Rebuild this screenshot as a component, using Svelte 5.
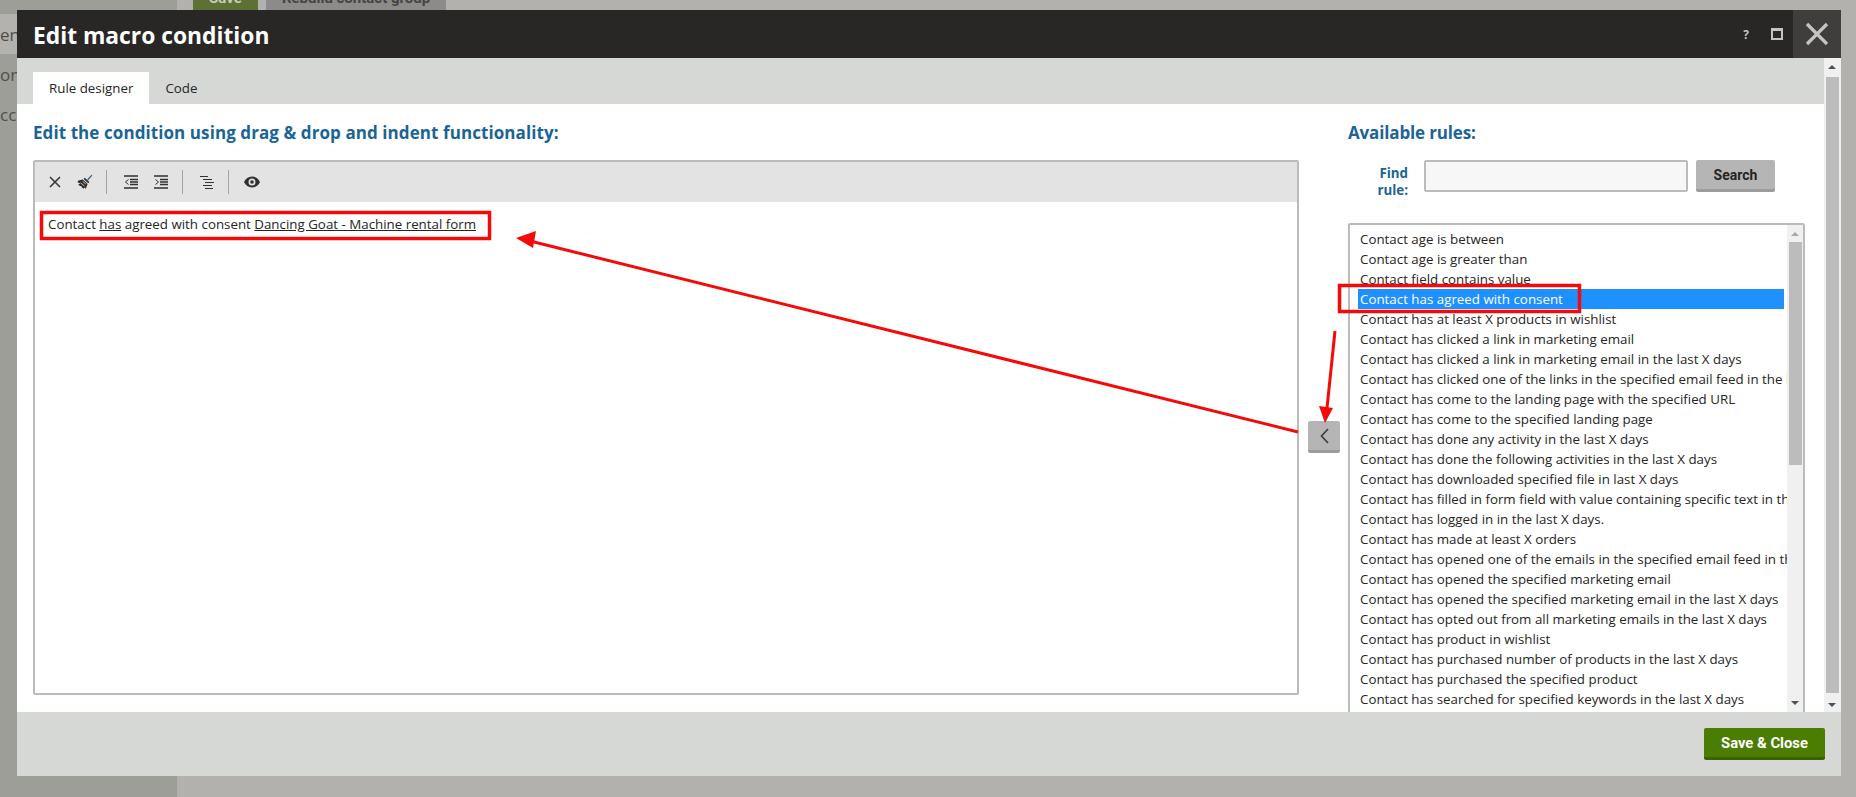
<script>
  const rules = [
    'Contact age is between',
    'Contact age is greater than',
    'Contact field contains value',
    'Contact has agreed with consent',
    'Contact has at least X products in wishlist',
    'Contact has clicked a link in marketing email',
    'Contact has clicked a link in marketing email in the last X days',
    'Contact has clicked one of the links in the specified email feed in the last X days',
    'Contact has come to the landing page with the specified URL',
    'Contact has come to the specified landing page',
    'Contact has done any activity in the last X days',
    'Contact has done the following activities in the last X days',
    'Contact has downloaded specified file in last X days',
    'Contact has filled in form field with value containing specific text in the last X days',
    'Contact has logged in in the last X days.',
    'Contact has made at least X orders',
    'Contact has opened one of the emails in the specified email feed in the last X days',
    'Contact has opened the specified marketing email',
    'Contact has opened the specified marketing email in the last X days',
    'Contact has opted out from all marketing emails in the last X days',
    'Contact has product in wishlist',
    'Contact has purchased number of products in the last X days',
    'Contact has purchased the specified product',
    'Contact has searched for specified keywords in the last X days'
  ];
  const selected = 'Contact has agreed with consent';
</script>

<div class="page">
  <div class="behind-side">
    <div class="side-row side-row--active">en</div>
    <div class="side-row">on</div>
    <div class="side-row">cc</div>
  </div>
  <div class="behind-actions">
    <span class="behind-btn behind-btn--save">Save</span>
    <span class="behind-btn">Rebuild contact group</span>
  </div>

  <div class="dialog">
    <header class="dialog__header">
      <h1>Edit macro condition</h1>
      <span class="dialog__help">?</span>
      <span class="dialog__max"></span>
      <button class="dialog__close" type="button" aria-label="Close">
        <svg width="24" height="24" viewBox="0 0 24 24"><path d="M2 2 22 22M22 2 2 22" stroke="#c4c4c0" stroke-width="3.2" fill="none"/></svg>
      </button>
    </header>

    <div class="dialog__body">
      <div class="dialog__main">
        <nav class="tabs">
          <span class="tab tab--active">Rule designer</span>
          <span class="tab">Code</span>
        </nav>

        <div class="content">
          <section class="designer">
            <h2>Edit the condition using drag &amp; drop and indent functionality:</h2>
            <div class="editor">
              <div class="toolbar">
                <svg class="ico ico--x" width="12" height="12" viewBox="0 0 12 12"><path d="M1 1 11 11M11 1 1 11" stroke="#3a3836" stroke-width="1.6" fill="none"/></svg>
                <svg class="ico ico--brush" width="16" height="16" viewBox="0 0 16 16">
                  <path d="M10.200 5.200 14.600.8l.8.8-4.200 4.600z" fill="#2f5f80"/>
                  <path d="M7.800 3.800 12.400 8l-1.200 1.300L6.600 5z" fill="#2e2c2a"/>
                  <path d="M5.800 5.600l4.800 4.400-1.800 4.800-1.600-1.400-.6 1.400-1.900-1.600-.2-1.500-1.200.6L1.200 10.400l2.300-1L.4 8.200l1-1.600z" fill="#2e2c2a"/>
                  <path d="M3.500 8.800 7.500 12M5.800 7.400 8.800 10" stroke="#e3e3e3" stroke-width=".8" fill="none"/>
                </svg>
                <span class="sep"></span>
                <svg class="ico ico--outdent" width="14" height="14" viewBox="0 0 14 14"><path d="M0 1h14M6 4.500h8M6 7h8M6 9.500h8M0 13h14" stroke="#33312f" stroke-width="1.500" fill="none"/><path d="M4.500 4.500 1.500 7l3 2.500" stroke="#33312f" fill="none"/></svg>
                <svg class="ico ico--indent" width="14" height="14" viewBox="0 0 14 14"><path d="M0 1h14M6 4.500h8M6 7h8M6 9.500h8M0 13h14" stroke="#33312f" stroke-width="1.500" fill="none"/><path d="M1.500 4.500 4.500 7l-3 2.500" stroke="#33312f" fill="none"/></svg>
                <span class="sep sep--b"></span>
                <svg class="ico ico--lines" width="14" height="14" viewBox="0 0 14 14"><path d="M0 1.500h8M3 4.500h9M5 7.500h9M3 10.500h9M5 13.500h8" stroke="#33312f" stroke-width="1.200" fill="none"/></svg>
                <span class="sep sep--c"></span>
                <svg class="ico ico--eye" width="16" height="12" viewBox="0 0 16 12"><path fill-rule="evenodd" d="M8 .5C4.500.5 1.600 2.600 0 6c1.600 3.400 4.500 5.500 8 5.500s6.400-2.100 8-5.500C14.400 2.600 11.500.5 8 .5zM8 2.500a3.500 3.500 0 1 1 0 7 3.500 3.500 0 0 1 0-7z" fill="#33312f"/><circle cx="8" cy="6" r="1.800" fill="#33312f"/></svg>
              </div>
              <div class="editor__area">
                Contact <u>has</u> agreed with consent <u>Dancing Goat - Machine rental form</u>
              </div>
            </div>
          </section>

          <div class="mover">
            <button class="mover__btn" type="button" aria-label="Add rule">
              <svg width="9" height="16" viewBox="0 0 9 16"><path d="M8 1 1.500 8 8 15" stroke="#403e3c" stroke-width="1.700" fill="none"/></svg>
            </button>
          </div>

          <section class="available">
            <h2>Available rules:</h2>
            <div class="find">
              <label for="find-rule">Find rule:</label>
              <input id="find-rule" type="text" />
              <button class="btn-search" type="button">Search</button>
            </div>
            <div class="rulebox">
              <ul>
                {#each rules as rule}
                  <li class:is-selected={rule === selected}>{rule}</li>
                {/each}
              </ul>
              <div class="scroll scroll--inner">
                <span class="arrow arrow--up"></span>
                <span class="thumb"></span>
                <span class="arrow arrow--down"></span>
              </div>
            </div>
          </section>
        </div>
      </div>

      <div class="scroll scroll--outer">
        <span class="arrow arrow--up"></span>
        <span class="thumb"></span>
        <span class="arrow arrow--down"></span>
      </div>
    </div>

    <footer class="dialog__footer">
      <button class="btn-save" type="button">Save &amp; Close</button>
    </footer>
  </div>

  <svg class="notes" width="1856" height="797" viewBox="0 0 1856 797">
    <rect x="41.500" y="212.500" width="448" height="26" fill="none" stroke="#f50a0a" stroke-width="3.500"/>
    <rect x="1339.500" y="285.500" width="240" height="26" fill="none" stroke="#f50a0a" stroke-width="3.500"/>
    <path d="M1298 432 530 241" stroke="#f50a0a" stroke-width="3" fill="none"/>
    <path d="M516 238 536 231 533 248z" fill="#f50a0a"/>
    <path d="M1335 331 1327 408" stroke="#f50a0a" stroke-width="3" fill="none"/>
    <path d="M1325 423 1319 406 1333 408z" fill="#f50a0a"/>
  </svg>
</div>

<style>
  :global(body) {
    margin: 0;
    font-family: "Open Sans", sans-serif;
    color: #262524;
  }

  .page {
    position: relative;
    height: 797px;
    overflow: hidden;
    background: #b3b1ae;
    padding: 10px 0 0 17px;
    box-sizing: border-box;
  }

  .behind-side {
    position: absolute;
    left: 0;
    top: 0;
    bottom: 0;
    width: 177px;
    padding-top: 14px;
    box-sizing: border-box;
    background: #9d9e98;
    color: #4e4e4a;
    font-size: 17px;
  }

  .side-row {
    height: 40px;
    line-height: 41px;
    white-space: nowrap;
  }

  .side-row--active {
    background: #b3b2ae;
  }

  .behind-actions {
    position: absolute;
    left: 193px;
    top: -14px;
    display: flex;
    gap: 8px;
  }

  .behind-btn {
    width: 180px;
    height: 24px;
    text-align: center;
    background: #8c8b89;
    color: #454442;
    font: bold 15px/24px Roboto, sans-serif;
  }

  .behind-btn--save {
    background: #5b7136;
    color: #c8cdb9;
    width: 65px;
  }

  .dialog {
    position: relative;
    width: 1824px;
    height: 766px;
    display: flex;
    flex-direction: column;
  }

  .dialog__header {
    flex: none;
    height: 48px;
    display: flex;
    align-items: center;
    background: #282725;
    color: #fff;
    padding-left: 16px;
  }

  .dialog__header h1 {
    flex: 1;
    margin: 0;
    padding-top: 2px;
    font-size: 22.8px;
    font-weight: 700;
  }

  .dialog__help {
    font-size: 12px;
    font-weight: 700;
    color: #c4c4c0;
    margin-right: 22px;
  }

  .dialog__max {
    width: 8px;
    height: 7px;
    border: 2px solid #c4c4c0;
    border-top-width: 3px;
    margin-right: 10px;
  }

  .dialog__close {
    width: 48px;
    height: 48px;
    border: 0;
    padding: 0;
    background: #403e3c;
    display: flex;
    align-items: center;
    justify-content: center;
  }

  .dialog__body {
    flex: 1;
    min-height: 0;
    display: flex;
  }

  .dialog__main {
    flex: 1;
    min-width: 0;
    display: flex;
    flex-direction: column;
    background: #fff;
  }

  .tabs {
    flex: none;
    height: 46px;
    box-sizing: border-box;
    padding: 14px 0 0 16px;
    background: #d6d8d5;
    display: flex;
    font-size: 13.33px;
  }

  .tab {
    padding: 0 16px;
    line-height: 32px;
  }

  .tab--active {
    background: #fff;
  }

  .content {
    flex: 1;
    min-height: 0;
    overflow: hidden;
    display: flex;
    padding-left: 16px;
  }

  h2 {
    margin: 0;
    height: 56px;
    padding-top: 18px;
    box-sizing: border-box;
    font-size: 17px;
    line-height: 22px;
    font-weight: 700;
    color: #1a6496;
  }

  .designer {
    flex: none;
    width: 1266px;
  }

  .designer h2 {
    letter-spacing: 0.08px;
  }

  .editor {
    height: 535px;
    box-sizing: border-box;
    border: 2px solid #bbb;
    border-radius: 2px;
  }

  .toolbar {
    height: 40px;
    background: #e3e3e3;
    display: flex;
    align-items: center;
    padding-left: 14px;
  }

  .ico {
    flex: none;
  }

  .ico--brush {
    margin-left: 16px;
  }

  .sep {
    flex: none;
    width: 1px;
    height: 24px;
    background: #a5a5a5;
    margin-left: 13px;
  }

  .ico--outdent {
    margin-left: 17px;
  }

  .ico--indent {
    margin-left: 16px;
  }

  .sep--b {
    margin-left: 14px;
  }

  .ico--lines {
    margin-left: 17px;
  }

  .sep--c {
    margin-left: 14px;
  }

  .ico--eye {
    margin-left: 15px;
  }

  .editor__area {
    padding: 12px 13px;
    font-size: 13.33px;
    line-height: 20px;
  }

  .mover {
    flex: none;
    width: 49px;
    padding-top: 317px;
    padding-left: 9px;
    box-sizing: border-box;
  }

  .mover__btn {
    display: flex;
    align-items: center;
    justify-content: center;
    width: 32px;
    height: 32px;
    padding: 0;
    border: 0;
    border-bottom: 3px solid #9c9c9c;
    border-radius: 2px;
    background: #b5b5b5;
  }

  .available {
    flex: none;
    width: 457px;
  }

  .available h2 {
    letter-spacing: -0.15px;
  }

  .find {
    display: flex;
    align-items: flex-start;
    height: 32px;
    margin-bottom: 31px;
  }

  .find label {
    width: 60px;
    padding-top: 5px;
    text-align: right;
    font-size: 13.33px;
    line-height: 17px;
    font-weight: 700;
    color: #1a6496;
  }

  .find input {
    width: 264px;
    height: 32px;
    margin-left: 16px;
    padding: 0;
    box-sizing: border-box;
    border: 2px solid #bbb;
    border-radius: 2px;
    background: #f7f7f7;
    outline: 0;
  }

  .btn-search {
    width: 79px;
    height: 32px;
    margin-left: 8px;
    padding: 1px 0 0;
    border: 0;
    border-bottom: 3px solid #9c9c9c;
    border-radius: 2px;
    background: #b5b5b5;
    color: #262524;
    font: bold 14px Roboto, sans-serif;
  }

  .rulebox {
    height: 540px;
    box-sizing: border-box;
    border: 2px solid #bbb;
    border-radius: 2px;
    display: flex;
    overflow: hidden;
  }

  .rulebox ul {
    flex: 1;
    min-width: 0;
    margin: 0;
    padding: 4px 0 0 8px;
    list-style: none;
    overflow: hidden;
    font-size: 13.33px;
    line-height: 20px;
  }

  .rulebox li {
    white-space: nowrap;
    padding-left: 2px;
    margin-right: 3px;
  }

  .rulebox li.is-selected {
    background: #1e90ff;
    color: #fff;
  }

  .scroll {
    flex: none;
    position: relative;
    background: #f0f0f0;
  }

  .scroll--outer {
    width: 17px;
    height: 654px;
  }

  .scroll--inner {
    width: 16px;
    height: 536px;
  }

  .thumb {
    position: absolute;
    background: #bcbcbc;
  }

  .scroll--outer .thumb {
    left: 2px;
    width: 13px;
    top: 19px;
    height: 616px;
  }

  .scroll--inner .thumb {
    left: 2px;
    width: 13px;
    top: 17px;
    height: 223px;
  }

  .arrow {
    position: absolute;
    left: 4px;
    width: 0;
    height: 0;
    border-left: 4px solid transparent;
    border-right: 4px solid transparent;
  }

  .arrow--up {
    top: 7px;
    border-bottom: 4px solid #50505a;
  }

  .scroll--inner .arrow--up {
    border-bottom-color: #a8a8a8;
  }

  .arrow--down {
    border-top: 4px solid #50505a;
  }

  .scroll--outer .arrow--down {
    top: 645px;
  }

  .scroll--inner .arrow--down {
    top: 476px;
  }

  .dialog__footer {
    flex: none;
    position: relative;
    height: 64px;
    display: flex;
    justify-content: flex-end;
    padding: 16px 16px 0 0;
    box-sizing: border-box;
    background: #d6d8d5;
  }

  .btn-save {
    width: 121px;
    height: 32px;
    padding: 0;
    border: 0;
    border-bottom: 3px solid #3a6300;
    border-radius: 2px;
    background: #4a7d00;
    color: #fff;
    font: bold 14.8px Roboto, sans-serif;
  }

  .notes {
    position: absolute;
    left: 0;
    top: 0;
    pointer-events: none;
  }
</style>
